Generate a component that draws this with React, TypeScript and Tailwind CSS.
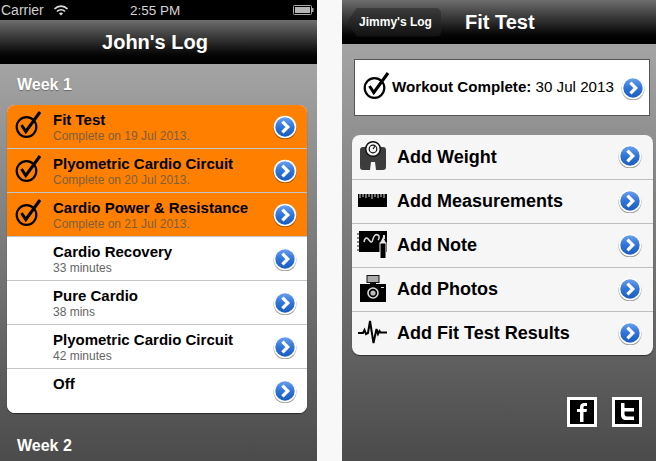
import React from "react";

const font = { fontFamily: '"Liberation Sans", Arial, sans-serif' };

function Disclosure({ id, size = 24 }: { id: string; size?: number }) {
  return (
    <svg width={size} height={size} viewBox="0 0 24 24" className="shrink-0">
      <defs>
        <linearGradient id={id} x1="0" y1="0" x2="0" y2="1">
          <stop offset="0" stopColor="#6a9fec" />
          <stop offset="0.5" stopColor="#2f74d8" />
          <stop offset="1" stopColor="#1b5cc0" />
        </linearGradient>
      </defs>
      <circle cx="12" cy="13" r="11.5" fill="#000" opacity="0.35" />
      <circle cx="12" cy="12" r="11.3" fill="#fff" />
      <circle cx="12" cy="12" r="9.7" fill={`url(#${id})`} />
      <path d="M9.4 6.600 L14.800 12 L9.400 17.400" fill="none" stroke="#fff" strokeWidth="3.200" />
    </svg>
  );
}

function Check() {
  return (
    <svg width="27" height="28" viewBox="0 0 27 28" className="shrink-0">
      <circle cx="11.500" cy="16" r="9.800" fill="none" stroke="#000" strokeWidth="2.200" />
      <path d="M6.500 14 L10.800 20.500 L25 1" fill="none" stroke="#000" strokeWidth="3" />
    </svg>
  );
}

function Weight() {
  return (
    <svg width="26" height="30" viewBox="0 0 26 30">
      <path d="M3 6h20a3 3 0 0 1 3 3v17a3 3 0 0 1-3 3h-7l-1-8h-4l-1 8H3a3 3 0 0 1-3-3V9a3 3 0 0 1 3-3z" fill="#3c3c3c" />
      <circle cx="13" cy="8" r="7.300" fill="#f4f4f4" stroke="#111" strokeWidth="1.500" />
      <circle cx="13" cy="8" r="3.800" fill="none" stroke="#111" strokeWidth="1.200" />
      <path d="M13 8l2-3" stroke="#111" strokeWidth="1.200" />
    </svg>
  );
}

function Ruler() {
  return (
    <svg width="29" height="13" viewBox="0 0 29 13">
      <rect x="0" y="0" width="29" height="13" fill="#000" />
      <path d="M2 0v4M5 0v3M8 0v4M11 0v3M14 0v5M17 0v3M20 0v4M23 0v3M26 0v4" stroke="#eee" strokeWidth="0.900" />
    </svg>
  );
}

function Note() {
  return (
    <svg width="31" height="28" viewBox="0 0 31 28">
      <rect x="2" y="0" width="28" height="21" fill="#000" />
      <path d="M0 3h4M0 7h4M0 11h4M0 15h4M0 19h4" stroke="#111" strokeWidth="1.200" />
      <path d="M7 11c1-5 3-5 5-2 2 3 3 3 4-1s3-5 5-4 1 4 0 5" fill="none" stroke="#ddd" strokeWidth="1.500" />
      <path d="M26 4l2 0v4h-2z" fill="#ddd" />
      <rect x="23" y="12" width="6" height="15.500" fill="#000" stroke="#f4f4f4" strokeWidth="1" />
      <path d="M26 6l3 6h-6z" fill="#e8e8e8" />
    </svg>
  );
}

function Camera() {
  return (
    <svg width="26" height="27" viewBox="0 0 26 27">
      <rect x="7" y="0.500" width="12" height="7" fill="#aaa" stroke="#111" />
      <rect x="10" y="7" width="6" height="3" fill="#111" />
      <rect x="0" y="9" width="26" height="18" fill="#000" />
      <circle cx="13" cy="18" r="5" fill="none" stroke="#ddd" strokeWidth="1.600" />
      <circle cx="13" cy="18" r="2.600" fill="#bbb" />
      <rect x="21" y="12" width="3" height="1" fill="#ddd" />
    </svg>
  );
}

function Pulse() {
  return (
    <svg width="29" height="25" viewBox="0 0 29 25">
      <path d="M0 13h5l1.500-3 1.500 4 2-1 2-12 3.500 22 3-14 1.500 5 1.500-3 1 1.500h7" fill="none" stroke="#000" strokeWidth="2" />
    </svg>
  );
}

function Social({ kind }: { kind: "f" | "t" }) {
  return (
    <div className="w-[30px] h-[30px] bg-black border-[3px] border-white flex items-center justify-center">
      {kind === "f" ? (
        <svg width="12" height="20" viewBox="0 0 12 20">
          <path d="M4 20V10H1V7h3V5c0-3 2-4 4-4h3v3H9C8 4 7.500 4.500 7.500 5.500V7H11l-.5 3h-3v10z" fill="#fff" />
        </svg>
      ) : (
        <svg width="18" height="20" viewBox="0 0 18 20">
          <path d="M3 1h3.500v5H16v3.500H6.500V12c0 1.500 1 2.500 2.500 2.500h7V18H8c-3 0-5-2-5-5z" fill="#fff" />
        </svg>
      )}
    </div>
  );
}

const rows = [
  { t: "Fit Test", s: "Complete on 19 Jul 2013.", done: true },
  { t: "Plyometric Cardio Circuit", s: "Complete on 20 Jul 2013.", done: true },
  { t: "Cardio Power & Resistance", s: "Complete on 21 Jul 2013.", done: true },
  { t: "Cardio Recovery", s: "33 minutes", done: false },
  { t: "Pure Cardio", s: "38 mins", done: false },
  { t: "Plyometric Cardio Circuit", s: "42 minutes", done: false },
  { t: "Off", s: "", done: false },
];

const actions = [
  { t: "Add Weight", i: <Weight /> },
  { t: "Add Measurements", i: <Ruler /> },
  { t: "Add Note", i: <Note /> },
  { t: "Add Photos", i: <Camera /> },
  { t: "Add Fit Test Results", i: <Pulse /> },
];

export default function App() {
  return (
    <div className="flex w-[656px] h-[461px] overflow-hidden bg-[#f8f8f8]" style={font}>
      <div className="w-[317px] h-full flex flex-col">
        <div className="h-[20px] bg-black flex items-center justify-between pl-[1px] pr-[3px] relative shrink-0 text-[#cfcfcf] text-[14px]">
          <div className="flex items-center gap-[9px]">
            <span>Carrier</span>
            <svg width="16" height="11" viewBox="0 0 15 11">
              <path d="M1 4a9 9 0 0 1 13 0M3.500 6.500a5.500 5.500 0 0 1 8 0" fill="none" stroke="#ddd" strokeWidth="1.700" />
              <path d="M5.500 8.500a3 3 0 0 1 4 0L7.500 10.500z" fill="#ddd" />
            </svg>
          </div>
          <span className="absolute left-[130px] top-[1px] text-[13.500px] text-[#d4d4d4]">2:55 PM</span>
          <svg width="21" height="10" viewBox="0 0 21 10">
            <rect x="0.500" y="0.500" width="18" height="9" rx="1" fill="none" stroke="#aaa" />
            <rect x="2" y="2" width="15" height="6" fill="#b5b5b5" />
            <rect x="19" y="3" width="1.500" height="4" fill="#aaa" />
          </svg>
        </div>
        <div className="h-[44px] shrink-0 flex items-center justify-center text-white text-[20px] font-bold bg-gradient-to-b from-[#6e6e6e] via-[#2c2c2c] to-[#000000] pr-[7px]">
          John's Log
        </div>
        <div className="flex-1 bg-gradient-to-b from-[#a4a4a4] to-[#4b4b4b] pl-[7px] pr-[10px] min-h-0">
          <div className="h-[41px] pt-[11px] pl-[10px] text-[16px] font-bold text-white leading-[20px] [text-shadow:0_1px_1px_rgba(0,0,0,0.35)]">Week 1</div>
          <div className="rounded-[8px] overflow-hidden bg-white shadow-[0_1px_1px_rgba(0,0,0,0.5)] flex flex-col">
            {rows.map((r, i) => (
              <div
                key={i}
                className={`h-[44px] ${i < 6 ? "border-b border-[#c4c4c4]" : ""} ${r.done ? "bg-[#ff8000]" : "bg-white"} flex items-center pl-[8px] pr-[10px]`}
              >
                <div className="w-[38px] shrink-0 -mt-[3px]">{r.done && <Check />}</div>
                <div className="flex-1 self-start pt-[6px]">
                  <div className="text-[15px] font-bold text-black leading-[18px]">{r.t}</div>
                  {r.s && <div className={`text-[12px] leading-[15px] ${r.done ? "text-[#7c5f3f]" : "text-[#666666]"}`}>{r.s}</div>}
                </div>
                <Disclosure id={`a${i}`} />
              </div>
            ))}
          </div>
          <div className="pt-[23px] pl-[10px] text-[16px] font-bold text-white leading-[20px]">Week 2</div>
        </div>
      </div>

      <div className="w-[314px] ml-[25px] h-full flex flex-col">
        <div className="h-[44px] shrink-0 flex items-center bg-gradient-to-b from-[#6e6e6e] via-[#2c2c2c] to-[#000000] pl-[5px]">
          <div className="w-[94px] h-[29px] bg-gradient-to-b from-[#3c3c3c] to-[#111111] text-white text-[12px] font-bold flex items-center justify-center pl-[3px] rounded-r-[5px] [clip-path:polygon(10px_0,100%_0,100%_100%,10px_100%,0_50%)]">
            Jimmy's Log
          </div>
          <div className="ml-[24px] text-white text-[20px] font-bold">Fit Test</div>
        </div>
        <div className="flex-1 bg-gradient-to-b from-[#a4a4a4] to-[#4b4b4b] min-h-0 flex flex-col pl-[10px] pr-[3px]">
          <div className="mt-[15px] ml-[2px] w-[296px] h-[57px] shrink-0 bg-white border border-[#555555] flex items-center pl-[8px] pr-[4px]">
            <div className="-mt-[3px]"><Check /></div>
            <div className="ml-[2px] flex-1 text-[15.150px] text-black whitespace-nowrap">
              <b>Workout Complete:</b> 30 Jul 2013
            </div>
            <Disclosure id="wc" />
          </div>
          <div className="mt-[19px] w-[301px] rounded-[8px] overflow-hidden bg-[#f6f6f6] shadow-[0_1px_1px_rgba(0,0,0,0.5)] shrink-0">
            {actions.map((a, i) => (
              <div key={a.t} className={`h-[44px] flex items-center pr-[11px] ${i > 0 ? "border-t border-[#bdbdbd]" : ""}`}>
                <div className="w-[41px] mr-[4px] shrink-0 flex justify-center -mt-[2px]">{a.i}</div>
                <div className="flex-1 text-[18px] font-bold text-black">{a.t}</div>
                <div className="-mt-[2px]"><Disclosure id={`b${i}`} /></div>
              </div>
            ))}
          </div>
          <div className="mt-[42px] flex justify-end gap-[15px] pr-[11px]">
            <Social kind="f" />
            <Social kind="t" />
          </div>
        </div>
      </div>
    </div>
  );
}
